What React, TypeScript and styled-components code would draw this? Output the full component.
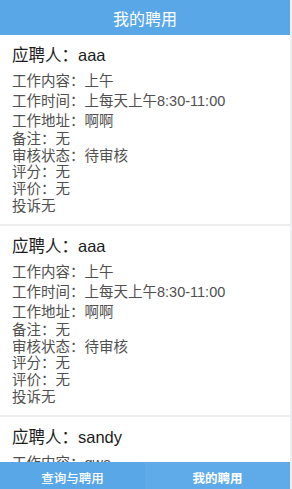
import React from "react";
import styled, { createGlobalStyle } from "styled-components";

const GlobalStyle = createGlobalStyle`
  html, body { margin: 0; padding: 0; background: #eef0f2; }
  body { font-family: "Liberation Sans", "Noto Sans CJK SC", sans-serif; }
`;

const Page = styled.div`
  width: 290px;
  height: 100vh;
  overflow: hidden;
  background: #ffffff;
`;

const Header = styled.header`
  height: 35px;
  background: #5aa7e8;
  color: #ffffff;
  font-size: 16px;
  display: flex;
  align-items: center;
  justify-content: center;
`;

const Card = styled.section`
  padding: 9px 12px 12px;
  border-bottom: 2px solid #eeeeee;
  background: #ffffff;
  height: 191px;
  box-sizing: border-box;
`;

const Title = styled.div`
  font-size: 16.5px;
  line-height: 22px;
  color: #1c1c1c;
  margin-bottom: 5px;
`;

const Line = styled.div<{ $tall?: boolean }>`
  font-size: 14.5px;
  line-height: ${(p) => (p.$tall ? "20px" : "16.7px")};
  color: #505050;
  white-space: nowrap;
`;

const TabBar = styled.nav`
  position: fixed;
  left: 0;
  bottom: 0;
  width: 290px;
  height: 27px;
  background: #5aa7e8;
  display: flex;
`;

const Tab = styled.div<{ $active?: boolean }>`
  flex: 1;
  display: flex;
  justify-content: center;
  align-items: flex-end;
  padding-bottom: 2px;
  box-sizing: border-box;
  color: #ffffff;
  font-size: 12.5px;
  font-weight: ${(p) => (p.$active ? 700 : 500)};
  background: ${(p) => (p.$active ? "#5fabea" : "transparent")};
`;

type Job = {
  name: string;
  content: string;
  time: string;
  address: string;
  remark: string;
  status: string;
  score: string;
  comment: string;
  complaint: string;
};

const jobs: Job[] = [
  {
    name: "aaa",
    content: "上午",
    time: "上每天上午8:30-11:00",
    address: "啊啊",
    remark: "无",
    status: "待审核",
    score: "无",
    comment: "无",
    complaint: "无",
  },
  {
    name: "aaa",
    content: "上午",
    time: "上每天上午8:30-11:00",
    address: "啊啊",
    remark: "无",
    status: "待审核",
    score: "无",
    comment: "无",
    complaint: "无",
  },
  {
    name: "sandy",
    content: "qwe",
    time: "每天下午",
    address: "无",
    remark: "无",
    status: "待审核",
    score: "无",
    comment: "无",
    complaint: "无",
  },
];

export default function App() {
  return (
    <>
      <GlobalStyle />
      <Page>
        <Header>我的聘用</Header>
        {jobs.map((j, i) => (
          <Card key={i}>
            <Title>应聘人：{j.name}</Title>
            <Line $tall>工作内容：{j.content}</Line>
            <Line $tall>工作时间：{j.time}</Line>
            <Line $tall>工作地址：{j.address}</Line>
            <Line>备注：{j.remark}</Line>
            <Line>审核状态：{j.status}</Line>
            <Line>评分：{j.score}</Line>
            <Line>评价：{j.comment}</Line>
            <Line>投诉{j.complaint}</Line>
          </Card>
        ))}
      </Page>
      <TabBar>
        <Tab>查询与聘用</Tab>
        <Tab $active>我的聘用</Tab>
      </TabBar>
    </>
  );
}
